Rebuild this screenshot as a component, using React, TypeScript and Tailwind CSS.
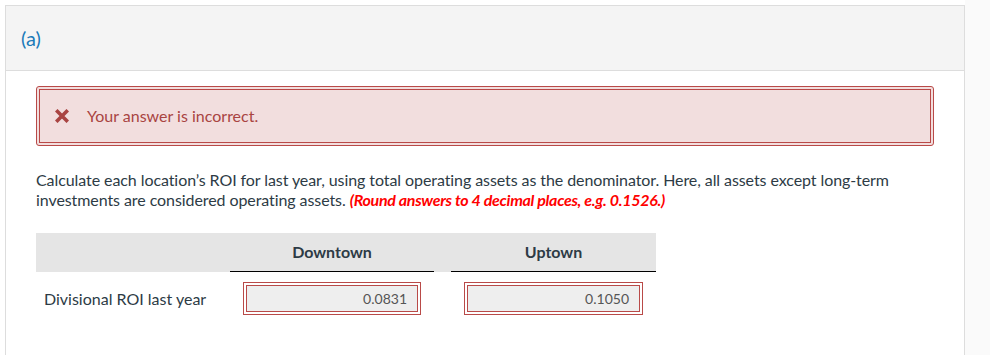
import React from "react";

export default function App() {
  return (
    <div className="w-[990px] h-[355px] overflow-hidden bg-white flex" style={{ fontFamily: "Lato, 'Open Sans', sans-serif" }}>
      <div className="pl-[5px] pt-[5px] w-[965px] shrink-0">
        <div className="border border-[#dddddd] h-[400px] bg-white">
          <div className="h-[65px] bg-[#f4f4f4] border-b border-[#dddddd] flex items-center pl-[15px]">
            <span className="text-[20px] text-[#1a7ab9]">(a)</span>
          </div>
          <div className="px-[30px] pt-[15px]">
            <div className="h-[60px] rounded-[3px] border border-[#b94a48] p-[2px] bg-[#f2dede]">
              <div className="h-full border border-[#b94a48] flex items-center pl-[15px]">
                <svg width="14" height="14" viewBox="0 0 14 14" className="mr-[18px]">
                  <path d="M2.5 2.5 L11.5 11.5 M11.5 2.5 L2.5 11.5" stroke="#a94442" strokeWidth="3.6" strokeLinecap="square" />
                </svg>
                <span className="text-[16px] text-[#a94442]">Your answer is incorrect.</span>
              </div>
            </div>
            <p className="mt-[24px] text-[16px] leading-[20px] tracking-[-0.08px] text-[#2d3b45]">
              Calculate each location’s ROI for last year, using total operating assets as the denominator. Here, all assets except long-term investments are considered operating assets.{" "}
              <span className="text-[#ff0000] font-bold italic tracking-[-0.3px]">(Round answers to 4 decimal places, e.g. 0.1526.)</span>
            </p>
            <div className="mt-[23px] w-[620px]">
              <div className="h-[39px] bg-[#e5e5e5] flex">
                <div className="w-[194px]" />
                <div className="w-[204px] border-b-[1.5px] border-black flex items-center justify-center text-[16px] font-bold text-[#2d3b45]">Downtown</div>
                <div className="w-[17px]" />
                <div className="w-[205px] border-b-[1.5px] border-black flex items-center justify-center text-[16px] font-bold text-[#2d3b45]">Uptown</div>
              </div>
              <div className="flex items-center pt-[10px]">
                <div className="w-[207px] pl-[8px] text-[16px] text-[#2d3b45]">Divisional ROI last year</div>
                <div className="w-[178px] h-[33px] border border-[#b94a48] p-[2px]">
                  <div className="h-full border border-[#b94a48] bg-[#eeeeee] flex items-center justify-end pr-[10px] text-[14px] text-[#555]">0.0831</div>
                </div>
                <div className="w-[43px]" />
                <div className="w-[179px] h-[33px] border border-[#b94a48] p-[2px]">
                  <div className="h-full border border-[#b94a48] bg-[#eeeeee] flex items-center justify-end pr-[10px] text-[14px] text-[#555]">0.1050</div>
                </div>
              </div>
            </div>
          </div>
        </div>
      </div>
      <div className="flex-1 bg-[#fafafa]" />
    </div>
  );
}
